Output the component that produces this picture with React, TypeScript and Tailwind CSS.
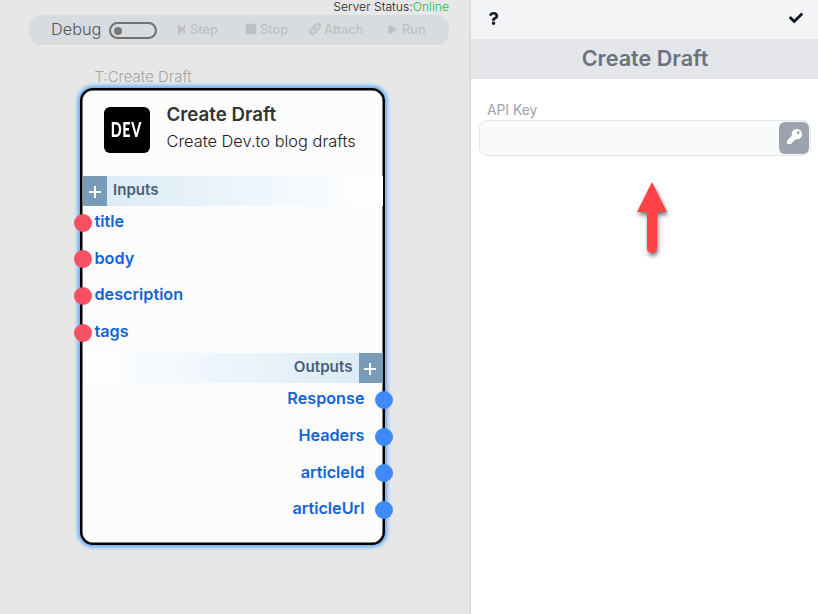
import React from "react";
import { FaStepForward, FaStop, FaLink, FaPlay, FaKey, FaCheck, FaQuestion } from "react-icons/fa";

const inputs = ["title", "body", "description", "tags"];
const outputs = ["Response", "Headers", "articleId", "articleUrl"];

function Toolbar() {
  return (
    <header className="ml-[29px] w-[420px]">
      <p className="h-[15px] text-right text-[12.2px] leading-[14px] font-light text-[#222]">
        Server Status:<span className="text-[#14bf3c]">Online</span>
      </p>
      <div className="flex h-[30px] items-center rounded-[13px] bg-[#d8dcdf] text-[12.8px] font-medium text-[#bfc0c2]">
        <span className="-mt-px ml-[22px] w-[58px] text-[16.3px] font-light text-[#555]">Debug</span>
        <div className="mt-px flex h-[17px] w-12 items-center rounded-full border-2 border-[#707070] px-[3px]">
          <span className="size-2 rounded-full bg-[#777]" />
        </div>
        <div className="ml-[20px] flex w-[68px] items-center">
          <FaStepForward className="mr-[3px] mb-0.5 -ml-px" size={11} />
          Step
        </div>
        <div className="flex w-[64px] items-center">
          <FaStop className="mr-[3px] mb-0.5" size={12} />
          Stop
        </div>
        <div className="flex w-[80px] items-center">
          <FaLink className="mr-[3px] mb-0.5" size={12} />
          Attach
        </div>
        <div className="flex items-center">
          <FaPlay className="mr-[5px] mb-0.5 -ml-px" size={9} />
          Run
        </div>
      </div>
    </header>
  );
}

function Plus() {
  return (
    <span className="flex w-6 shrink-0 items-center justify-center bg-[#789bb8]">
      <svg className="mt-[2px] mr-px size-3" viewBox="0 0 12 12" stroke="white" strokeWidth="2">
        <path d="M6 0v12M0 6h12" />
      </svg>
    </span>
  );
}

function NodeCard() {
  return (
    <article className="absolute top-[88px] left-20 h-[457px] w-[305px] rounded-[13px] border-2 border-black bg-[#fcfcfc] pl-px shadow-[0_0_4px_2px_#51a5f5,inset_0_0_0_0.5px_black]">
      <div className="flex h-[86px] pt-[16.5px] pl-[20.5px]">
        <div className="flex size-[46px] items-center justify-center rounded-[6px] bg-black">
          <span className="scale-x-[0.7] font-[Lato] text-[20.5px] leading-none font-black tracking-[1px] text-white">DEV</span>
        </div>
        <div className="ml-[17px] whitespace-nowrap text-[#333]">
          <h2 className="-mt-[3px] text-[18.7px] leading-[22px] font-semibold">Create Draft</h2>
          <p className="mt-[4.5px] text-[16.4px] leading-[22px] font-light text-[#222]">Create Dev.to blog drafts</p>
        </div>
      </div>
      <div className="flex h-[30px] bg-linear-to-r from-[#d9eaf6] to-white text-[15.1px] leading-[27px] font-semibold text-[#4c5e75]">
        <Plus />
        <span className="ml-1.5">Inputs</span>
      </div>
      <ul className="h-[147px] text-[16.2px] font-semibold text-[#1264d8]">
        {inputs.map((name) => (
          <li key={name} className="-ml-[9px] flex h-[36.67px] items-start gap-[2.5px]">
            <span className="mt-[7.7px] size-[18px] rounded-full bg-[#f55064]" />
            <span className="mt-1 leading-[22px]">{name}</span>
          </li>
        ))}
      </ul>
      <div className="flex h-[30px] justify-end bg-linear-to-l from-[#d9eaf6] to-white text-[15.2px] leading-[27px] font-semibold text-[#4c5e75]">
        <span className="mr-1.5">Outputs</span>
        <span className="flex bg-[#789bb8] pr-[0.5px]">
          <Plus />
        </span>
      </div>
      <ul className="text-[16.2px] font-semibold text-[#1264d8]">
        {outputs.map((name) => (
          <li key={name} className="-mr-[9.5px] flex h-[36.67px] items-start justify-end gap-[10px]">
            <span className="mt-[4.3px] leading-[22px]">{name}</span>
            <span className="mt-[7.9px] size-[18px] rounded-full bg-[#3e8afa]" />
          </li>
        ))}
      </ul>
    </article>
  );
}

function Sidebar() {
  return (
    <aside className="w-[349px] shrink-0 border-l-2 border-[#d8dbe1] bg-white">
      <div className="flex h-[39px] items-center justify-between bg-[#f3f4f6] pr-[15px] pb-[3px] pl-[15.5px] text-[#111827]">
        <FaQuestion size={13} />
        <FaCheck size={14} />
      </div>
      <h1 className="h-10 bg-[#e5e6ea] pl-px text-center text-[21.6px] leading-[39px] font-semibold text-[#6b7280]">Create Draft</h1>
      <div className="pt-[22px] pr-[7px] pl-2">
        <label className="block h-[19px] pl-2 text-[13.8px] leading-[18px] text-[#9ca3af]">API Key</label>
        <div className="flex h-9 items-center justify-end rounded-lg border border-[#e5e7eb] bg-[#f9fafc] pr-px">
          <button className="flex h-8 w-[30px] items-center justify-center rounded-md bg-[#9ca3af] pb-[3px] text-white">
            <FaKey size={15} />
          </button>
        </div>
        <svg className="mt-[21px] ml-[148px] h-[90px] w-[50px] overflow-visible drop-shadow-[1px_3px_2px_rgba(0,0,0,0.55)]" viewBox="0 0 50 90" fill="#ff4346">
          <path d="M25 5L40 35H30V71a5 5 0 0 1-10 0V35H10Z" />
        </svg>
      </div>
    </aside>
  );
}

export default function App() {
  return (
    <main className="flex h-[614px] w-[818px] overflow-hidden font-['Inter',sans-serif]">
      <section className="relative w-[469px] shrink-0 bg-[#e7e7e7]">
        <Toolbar />
        <p className="mt-[23px] ml-[94.5px] text-[15px] leading-[18px] font-light text-[#a4a4a4]">T:Create Draft</p>
        <NodeCard />
      </section>
      <Sidebar />
    </main>
  );
}
